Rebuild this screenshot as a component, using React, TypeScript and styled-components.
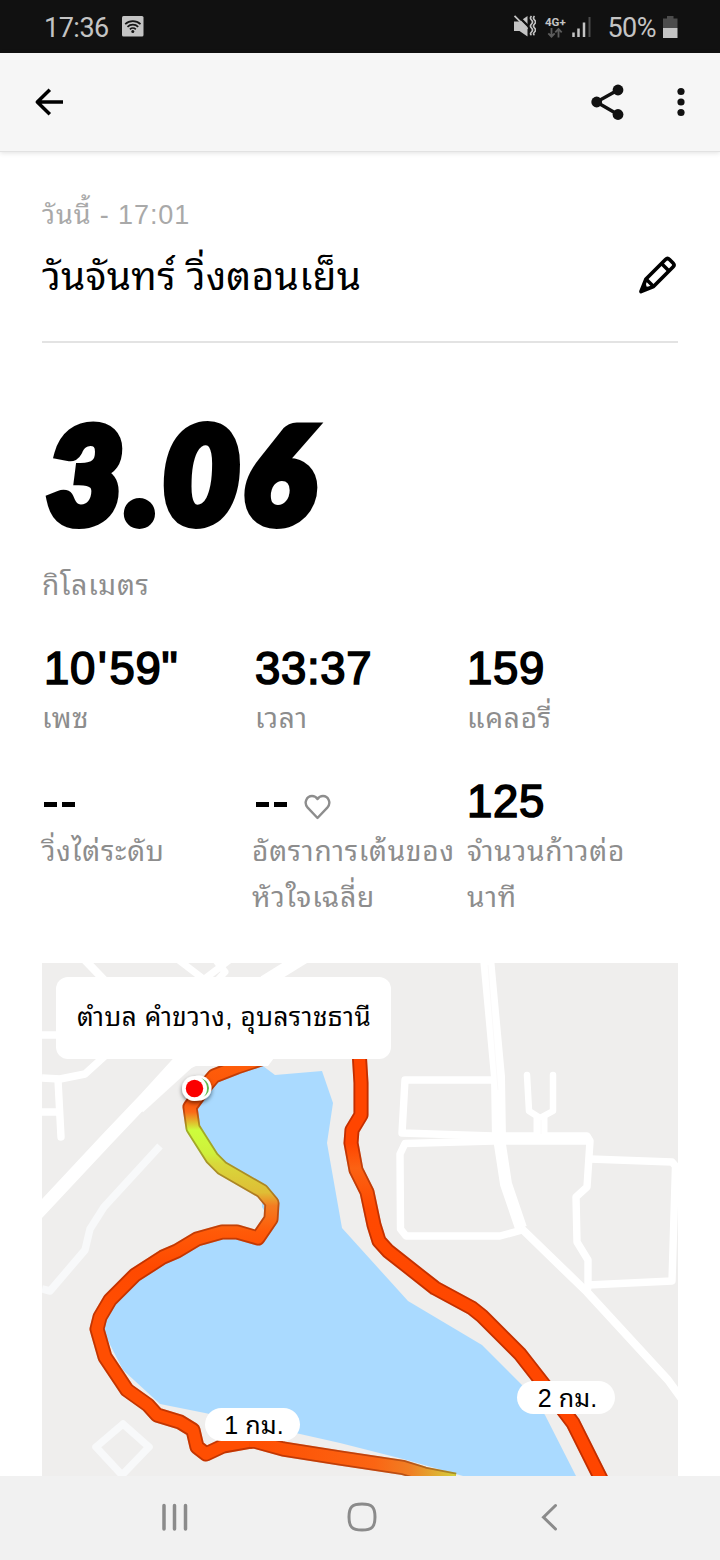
import React from "react";
import styled, { createGlobalStyle } from "styled-components";

const GlobalStyle = createGlobalStyle`
  * { box-sizing: border-box; }
  html, body { margin: 0; padding: 0; background: #fff; }
  body { font-family: "Liberation Sans", "Noto Sans Thai Looped", Loma, Garuda, Waree, "Noto Sans Thai", "Noto Sans", sans-serif; color: #000; }
  svg { display: block; flex: none; }
`;

const Screen = styled.div`
  width: 720px;
  height: 1560px;
  display: flex;
  flex-direction: column;
  overflow: hidden;
  background: #fff;
`;

const StatusBar = styled.header`
  height: 53px;
  flex: none;
  display: flex;
  align-items: center;
  justify-content: space-between;
  padding: 0 42px 0 44px;
  background: #111;
  color: #c4c4c4;
  font-family: Roboto, sans-serif;
`;

const StatusGroup = styled.div`
  display: flex;
  align-items: center;
`;

const StatusText = styled.span<{ $before?: number; $after?: number }>`
  font-size: 27px;
  line-height: 32px;
  letter-spacing: -0.5px;
  margin-left: ${(p) => p.$before ?? 0}px;
  margin-right: ${(p) => p.$after ?? 0}px;
  padding-top: 2px;
`;

const Network = styled.span`
  display: flex;
  flex-direction: column;
  align-items: center;
  width: 22px;
  margin: 1px 6px 0 8px;
  font-size: 11.5px;
  font-weight: 700;
  line-height: 12px;
  white-space: nowrap;
`;

const AppBar = styled.nav`
  height: 99px;
  flex: none;
  display: flex;
  align-items: center;
  padding: 0 30px 0 34px;
  background: #f6f6f6;
  border-bottom: 1px solid #e2e2e2;
  box-shadow: 0 1px 5px rgba(0, 0, 0, 0.12);
  z-index: 1;
`;

const IconButton = styled.button<{ $push?: boolean; $gap?: number }>`
  border: 0;
  padding: 0;
  background: none;
  margin-left: ${(p) => (p.$push ? "auto" : `${p.$gap ?? 0}px`)};
`;

const Content = styled.main`
  flex: 1;
  min-height: 0;
  display: flex;
  flex-direction: column;
  padding: 0 42px;
`;

const RunHeader = styled.section`
  height: 191px;
  flex: none;
  display: flex;
  justify-content: space-between;
  border-bottom: 2px solid #e3e3e3;
  padding-top: 44px;
`;

const RunDate = styled.div`
  font-size: 27px;
  line-height: 38px;
  letter-spacing: 0.9px;
  color: #a9a9a9;
  white-space: nowrap;
`;

const RunTitle = styled.h1`
  margin: 17px 0 0;
  font-size: 39px;
  font-weight: 400;
  line-height: 52px;
  letter-spacing: 0.25px;
  white-space: nowrap;
`;

const EditButton = styled(IconButton)`
  align-self: flex-start;
  margin-top: 59px;
`;

const Distance = styled.div`
  height: 180px;
  margin: 40px 0 0 5px;
  flex: none;
  font-family: Lato, sans-serif;
  font-size: 131px;
  font-weight: 900;
  font-style: italic;
  line-height: 179px;
  letter-spacing: 4.3px;
  -webkit-text-stroke: 10px #000;
  white-space: nowrap;
`;

const Label = styled.div<{ $shift?: number }>`
  font-size: 28px;
  line-height: 46px;
  color: #8d8d8d;
  margin-left: ${(p) => p.$shift ?? 0}px;
  letter-spacing: 0.8px;
  white-space: nowrap;
`;

const Stats = styled.section`
  height: 354px;
  flex: none;
  padding-top: 33px;
  display: grid;
  grid-template-columns: 212px 213px 1fr;
  grid-template-rows: 133px 180px;
`;

const Value = styled.div<{ $indent?: number }>`
  height: 54px;
  display: flex;
  align-items: center;
  padding-left: ${(p) => p.$indent ?? 0}px;
  font-size: 45.5px;
  line-height: 54px;
  letter-spacing: 0.7px;
  -webkit-text-stroke: 1.6px #000;
`;

const Prime = styled.span`
  padding: 0 2px;
`;

const Dashes = styled.span`
  display: flex;
  gap: 5px;
  margin-right: 17px;
  padding: 5px 0 0 2px;
  &::before, &::after {
    content: "";
    width: 13px;
    height: 5px;
    background: #000;
  }
`;

const MapPanel = styled.section`
  position: relative;
  height: 513px;
  flex: none;
  overflow: hidden;
  background: #efeeed;
`;

const PlaceCard = styled.div`
  position: absolute;
  left: 14px;
  top: 14px;
  width: 335px;
  height: 82px;
  padding-left: 21px;
  border-radius: 12px;
  background: #fff;
  font-size: 26px;
  line-height: 80px;
  letter-spacing: 0.45px;
  white-space: nowrap;
`;

const KmPin = styled.div<{ $x: number; $y: number; $w: number }>`
  position: absolute;
  left: ${(p) => p.$x}px;
  top: ${(p) => p.$y}px;
  width: ${(p) => p.$w}px;
  height: 33px;
  padding-left: 3px;
  border-radius: 17px;
  background: #fff;
  text-align: center;
  font-size: 25px;
  line-height: 35px;
  letter-spacing: 0.1px;
  white-space: nowrap;
`;

const NavBar = styled.footer`
  height: 84px;
  flex: none;
  display: flex;
  align-items: center;
  justify-content: space-between;
  padding: 0 160px 3px 160px;
  background: #f1f1f1;
`;

const HomeButton = styled(IconButton)`
  margin-right: 7px;
`;

const HeartSlot = styled.span`
  margin-top: 9px;
`;

const LOOP_PATH =
  "M264 1058L237 1067L214 1076L203 1089L190 1107L193 1128L212 1158L222 1168L262 1191L272 1203L271 1219L258 1238L237 1232L222 1232L197 1239L177 1251L163 1257L135 1275L110 1300L100 1317L97 1329L105 1357L127 1390L148 1405L157 1415L180 1422L193 1430L197 1447L206 1454L223 1446L251 1441";
const SOUTH_PATH = "M249 1441.2L254 1441L283 1449L340 1458L403 1467.5L424 1474L455 1480";
const EAST_PATH =
  "M359 1050L361 1083L361 1115L352 1130L351 1143L356 1170L367 1192L374 1225L379 1241L388 1251L435 1288L472 1308L482 1316L520 1354L545 1386L573 1423L603 1483";

const Route = ({ d, paint }: { d: string; paint: string }) => (
  <g fill="none" strokeLinejoin="round">
    <path d={d} stroke={paint} strokeWidth="15" />
    <path d={d} stroke="#400" strokeOpacity=".32" strokeWidth="15" />
    <path d={d} stroke={paint} strokeWidth="11.4" />
  </g>
);

const MapDrawing = () => (
  <svg width="636" height="513" viewBox="42 963 636 513">
    <defs>
      <linearGradient id="loop" gradientUnits="userSpaceOnUse" x1="0" y1="1060" x2="0" y2="1320">
        <stop offset="0" stopColor="#ff5f0a" />
        <stop offset=".16" stopColor="#fb5208" />
        <stop offset=".2" stopColor="#fb6a18" />
        <stop offset=".27" stopColor="#cdfd3c" />
        <stop offset=".36" stopColor="#cff03b" />
        <stop offset=".4" stopColor="#d8d83b" />
        <stop offset=".51" stopColor="#dfbd35" />
        <stop offset=".56" stopColor="#f37d22" />
        <stop offset=".66" stopColor="#ff5a08" />
        <stop offset=".8" stopColor="#ff4900" />
        <stop offset="1" stopColor="#ff4e02" />
      </linearGradient>
      <linearGradient id="south" gradientUnits="userSpaceOnUse" x1="253" y1="0" x2="455" y2="0">
        <stop offset="0" stopColor="#ff4e02" />
        <stop offset=".6" stopColor="#fb6513" />
        <stop offset=".78" stopColor="#f07f24" />
        <stop offset="1" stopColor="#d5cf3c" />
      </linearGradient>
      <linearGradient id="east" gradientUnits="userSpaceOnUse" x1="0" y1="1060" x2="0" y2="1476">
        <stop offset="0" stopColor="#ff4500" />
        <stop offset=".2" stopColor="#ff4500" />
        <stop offset=".26" stopColor="#fb6213" />
        <stop offset=".36" stopColor="#ff4900" />
        <stop offset="1" stopColor="#ff4500" />
      </linearGradient>
      <filter id="drop" x="-50%" y="-50%" width="200%" height="200%">
        <feDropShadow dx="0" dy="2" stdDeviation="2" floodOpacity=".55" />
      </filter>
    </defs>
    <path
      fill="#aadaff"
      d="M214 1079L240 1064L263 1066L275 1075L322 1071L333 1103L327 1143L342 1228L408 1301L482 1345L522 1385L545 1415L576 1476L463 1476L403 1459L340 1443L300 1434L205 1413L160 1404L123 1370L101 1327L112 1302L140 1273L200 1240L225 1236L258 1240L270 1220L262 1207L262 1194L222 1166L197 1130L194 1105Z"
    />
    <g fill="none" stroke="#f8f9fa" strokeWidth="7.5" strokeLinejoin="round">
      <path d="M160 1146L104 1207L90 1229L85 1250L50 1291L42 1289" />
      <path d="M123 1424L149 1447L122 1475L96 1447Z" />
    </g>
    <g fill="none" stroke="#fff" strokeWidth="7.400" strokeLinejoin="round">
      <path d="M83 958L106 982" strokeWidth="8" />
      <path d="M176 958L210 984M232 958L190 990M214 958L225 972L214 984" strokeWidth="7" />
      <path d="M306 956L264 982" strokeWidth="13" />
      <path d="M42 1035H58M42 1078L60 1079L85 1074L107 1054M42 1112H60" />
      <path d="M58 1080L61 1137" strokeLinecap="round" />
      <path d="M34 1217L107 1139L146 1098L188 1052" strokeWidth="13" />
      <path d="M196 1058L140 1109" strokeWidth="9" />
      <path d="M487 958L498 1077L499 1140" strokeWidth="14" />
      <path d="M499 1138L506 1184L521 1228" strokeWidth="12" />
      <path d="M521 1228L587 1292L668 1380L684 1402" strokeWidth="8" />
      <path d="M492 1080H405L402 1133L493 1136L587 1136L590 1141L587 1187L576 1197L577 1242L588 1260L588 1285L587 1294" />
      <path d="M590 1141H493L405 1143.500L400 1154L400.500 1229L406 1236H500L522 1230" />
      <path d="M590 1159L672 1162L675.500 1166L672 1281L588 1285" />
      <path d="M527 1075L529 1111L540 1118L553 1111V1075" strokeWidth="6.500" strokeLinecap="round" />
      <path d="M540.500 1117V1138" strokeWidth="14" />
    </g>
    <path d="M488 965L498 1090M541 1120V1134" stroke="#fbfafa" strokeWidth="1" />
    <Route d={EAST_PATH} paint="url(#east)" />
    <Route d={LOOP_PATH} paint="url(#loop)" />
    <Route d={SOUTH_PATH} paint="url(#south)" />
    <path d="M176 1050H280L268 1066H196L182 1072Z" fill="#fff" />
    <g filter="url(#drop)">
      <circle cx="199" cy="1088" r="12.500" fill="#fff" />
      <circle cx="199" cy="1088" r="10" fill="#63b950" />
      <circle cx="194.500" cy="1088.500" r="12.500" fill="#fff" />
    </g>
    <circle cx="194.500" cy="1088.500" r="8.700" fill="#fb0000" />
  </svg>
);

const HotspotIcon = () => (
  <svg width="22" height="21" viewBox="0 0 22 21">
    <rect width="21.500" height="20.500" rx="1.500" fill="#c4c4c4" />
    <g fill="none" stroke="#151515" strokeWidth="1.700">
      <path d="M3.200 8.200a11 11 0 0 1 15.300 0M5.500 10.800a7.700 7.700 0 0 1 10.700 0M7.900 13.300a4.300 4.300 0 0 1 5.900 0" />
    </g>
    <circle cx="10.800" cy="15.400" r="1.500" fill="#151515" />
  </svg>
);

const MuteIcon = () => (
  <svg width="23" height="23" viewBox="0 0 23 23">
    <path d="M1 6.500H6.500L14.500 1V21.500L6.500 16H1Z" fill="#c4c4c4" />
    <path d="M3.500 -.5L16 12" stroke="#111" strokeWidth="2.400" />
    <path d="M1.500 .8L14.500 13.800" stroke="#c4c4c4" strokeWidth="1.800" />
    <path d="M18.500 1q-2 2 0 4t0 4t0 4t0 4t0 3M21.500 1q-2 2 0 4t0 4t0 4t0 4t0 3" stroke="#c4c4c4" strokeWidth="1.700" fill="none" />
  </svg>
);

const DataArrows = () => (
  <svg width="16" height="10" viewBox="0 0 16 10">
    <path d="M4.500 0V8.500M1.300 5.300L4.500 8.700L7.700 5.300M11.500 9.500V1M8.300 4.300L11.500 .9L14.700 4.300" stroke="#5c5c5c" strokeWidth="1.800" fill="none" />
  </svg>
);

const SignalIcon = () => (
  <svg width="19" height="20" viewBox="0 0 19 20">
    <path d="M1.500 15.500V20M6.500 11.500V20M12 5.500V20" stroke="#c4c4c4" strokeWidth="2.500" />
    <path d="M17.500 0V20" stroke="#4c4c4c" strokeWidth="2" />
  </svg>
);

const BatteryIcon = () => (
  <svg width="15" height="22" viewBox="0 0 15 22">
    <path d="M0 2.500H4V0H10.500V2.500H14.500V12H0Z" fill="#4c4c4c" />
    <path d="M0 12H14.500V22H0Z" fill="#c4c4c4" />
  </svg>
);

const BackArrow = () => (
  <svg width="30" height="30" viewBox="0 0 30 30">
    <path d="M29 15H3.500M15.800 2.700L3.300 15L15.800 27.300" fill="none" stroke="#000" strokeWidth="3.500" strokeLinejoin="round" />
  </svg>
);

const ShareIcon = () => (
  <svg width="34" height="36" viewBox="0 0 34 36">
    <path d="M27 6L5.500 18L27 30.500" fill="none" stroke="#111" strokeWidth="3.400" />
    <circle cx="27" cy="6" r="5.400" fill="#111" />
    <circle cx="5.700" cy="18" r="5.400" fill="#111" />
    <circle cx="27" cy="30.500" r="5.400" fill="#111" />
  </svg>
);

const MoreIcon = () => (
  <svg width="18" height="30" viewBox="0 0 18 30">
    {[4.5, 15, 25.5].map((y) => (
      <circle key={y} cx="9" cy={y} r="3.600" fill="#111" />
    ))}
  </svg>
);

const PencilIcon = () => (
  <svg width="40" height="40" viewBox="0 0 40 40">
    <path
      d="M3 36.500L8 24L27.500 4.500Q29.500 2.500 31.500 4.500L35 8Q37 10 35 12L15.500 31.500Z"
      fill="none"
      stroke="#000"
      strokeWidth="3.700"
      strokeLinejoin="round"
    />
    <path d="M24 9L31.500 16.500M8 24L15.500 31.500" stroke="#000" strokeWidth="3.500" />
    <path d="M2.500 37L6 28.500L8 29L8.500 31.500L11 32V33.500Z" />
  </svg>
);

const HeartIcon = () => (
  <svg width="27" height="26" viewBox="0 0 27 26">
    <path
      d="M13.500 24L3.700 13.600C-.8 8.500 3 2 8 2C10.300 2 12.200 3 13.500 5C14.800 3 16.700 2 19 2C24 2 27.800 8.500 23.300 13.600Z"
      fill="none"
      stroke="#8d8d8d"
      strokeWidth="2.400"
      strokeLinejoin="round"
    />
  </svg>
);

const RecentsIcon = () => (
  <svg width="30" height="30" viewBox="0 0 30 30">
    <path d="M4 3.500V27M14.500 3.500V27M25.500 3.500V27" stroke="#8b8b8b" strokeWidth="3.500" strokeLinecap="round" />
  </svg>
);

const HomeIcon = () => (
  <svg width="30" height="30" viewBox="0 0 30 30">
    <path
      d="M15 2C25 2 28 5 28 15S25 28 15 28S2 25 2 15S5 2 15 2Z"
      fill="none"
      stroke="#8b8b8b"
      strokeWidth="3"
    />
  </svg>
);

const NavBackIcon = () => (
  <svg width="20" height="30" viewBox="0 0 20 30">
    <path d="M15.500 3.500L3.500 15.200L15.500 27" fill="none" stroke="#8b8b8b" strokeWidth="3" strokeLinecap="round" />
  </svg>
);

const App = () => (
  <>
    <GlobalStyle />
    <Screen>
      <StatusBar>
        <StatusGroup>
          <StatusText $after={13}>17:36</StatusText>
          <HotspotIcon />
        </StatusGroup>
        <StatusGroup>
          <MuteIcon />
          <Network>
            4G+
            <DataArrows />
          </Network>
          <SignalIcon />
          <StatusText $before={16} $after={7}>50%</StatusText>
          <BatteryIcon />
        </StatusGroup>
      </StatusBar>
      <AppBar>
        <IconButton aria-label="back"><BackArrow /></IconButton>
        <IconButton aria-label="share" $push><ShareIcon /></IconButton>
        <IconButton aria-label="more" $gap={47}><MoreIcon /></IconButton>
      </AppBar>
      <Content>
        <RunHeader>
          <div>
            <RunDate>วันนี้ - 17:01</RunDate>
            <RunTitle>วันจันทร์ วิ่งตอนเย็น</RunTitle>
          </div>
          <EditButton aria-label="edit"><PencilIcon /></EditButton>
        </RunHeader>
        <Distance>3.06</Distance>
        <Label>กิโลเมตร</Label>
        <Stats>
          <div>
            <Value $indent={2}>10<Prime>'</Prime>59"</Value>
            <Label>เพซ</Label>
          </div>
          <div>
            <Value $indent={1}>33:37</Value>
            <Label $shift={1}>เวลา</Label>
          </div>
          <div>
            <Value>159</Value>
            <Label>แคลอรี่</Label>
          </div>
          <div>
            <Value><Dashes /></Value>
            <Label>วิ่งไต่ระดับ</Label>
          </div>
          <div>
            <Value><Dashes /><HeartSlot><HeartIcon /></HeartSlot></Value>
            <Label $shift={-2}>อัตราการเต้นของ<br />หัวใจเฉลี่ย</Label>
          </div>
          <div>
            <Value>125</Value>
            <Label>จำนวนก้าวต่อ<br />นาที</Label>
          </div>
        </Stats>
        <MapPanel>
          <MapDrawing />
          <PlaceCard>ตำบล คำขวาง, อุบลราชธานี</PlaceCard>
          <KmPin $x={163} $y={445} $w={95}>1 กม.</KmPin>
          <KmPin $x={475} $y={418} $w={98}>2 กม.</KmPin>
        </MapPanel>
      </Content>
      <NavBar>
        <RecentsIcon />
        <HomeButton aria-label="home"><HomeIcon /></HomeButton>
        <NavBackIcon />
      </NavBar>
    </Screen>
  </>
);

export default App;
